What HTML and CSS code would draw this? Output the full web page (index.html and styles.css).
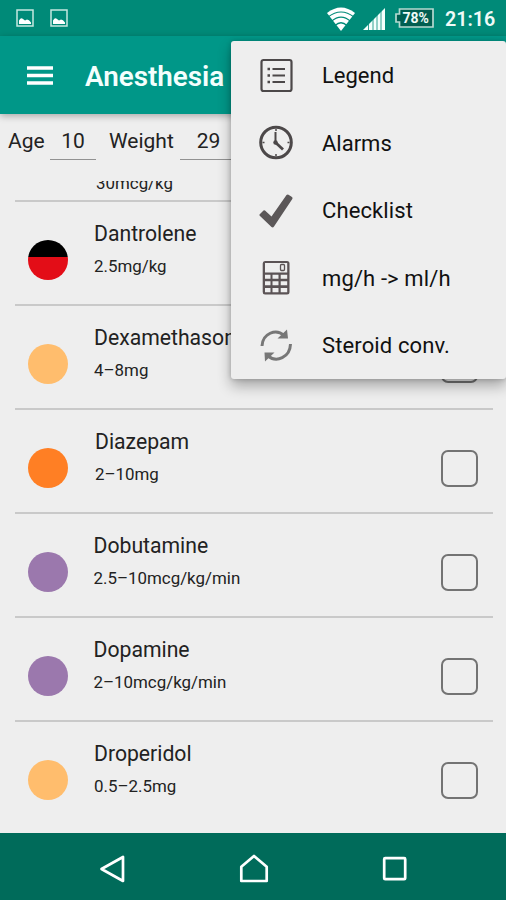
FILE: index.html
```html
<!DOCTYPE html>
<html lang="en">
<head>
<meta charset="utf-8">
<title>Anesthesia</title>
<link rel="stylesheet" href="styles.css">
</head>
<body>
<div class="screen">
  <div class="status">
    <svg class="pic" viewBox="0 0 18 18"><rect x="1" y="1" width="16" height="16" fill="none" stroke="#c5e8e0" stroke-width="1.5"/><path d="M3 15v-3.500q2-3.500 4-1.500l2 1.500 2-1q2 0 4 3V15z" fill="#fff"/></svg>
    <svg class="pic" viewBox="0 0 18 18"><rect x="1" y="1" width="16" height="16" fill="none" stroke="#c5e8e0" stroke-width="1.5"/><path d="M3 15v-3.500q2-3.500 4-1.500l2 1.500 2-1q2 0 4 3V15z" fill="#fff"/></svg>
    <svg class="wifi" viewBox="0 0 28 24"><path d="M0 6Q14-5 28 6L14 24z" fill="#fff"/><path d="M1 10Q14 0 27 10M4.500 14.200Q14 6 23.500 14.200M8 18.500Q14 13 20 18.500" fill="none" stroke="#008a78" stroke-width="1.200"/></svg>
    <svg class="signal" viewBox="0 0 22 22"><path d="M0 22L22 0V22z" fill="#f4fffc"/><path d="M5.500 15v7M10 10v12M14 6v16M18 2v20" stroke="#008a78" stroke-width=".8"/></svg>
    <div class="battery">
      <svg viewBox="0 0 39 20"><path d="M4.500 1H38V19H4.500V14H1V6H4.500z" fill="#005e50" stroke="#b5d9d0" stroke-width="1.700"/></svg>
      <span>78%</span>
    </div>
    <span class="time">21:16</span>
  </div>
  <header class="appbar">
    <svg class="burger" viewBox="0 0 26 20"><path d="M0 2h26M0 9.500h26M0 17h26" stroke="#fff" stroke-width="3.600"/></svg>
    <h1>Anesthesia</h1>
  </header>
  <div class="filters">
    <span class="label age">Age</span><span class="field f1">10</span>
    <span class="label weight">Weight</span><span class="field f2">29</span>
  </div>
  <main class="list">
    <div class="row first"><div class="text"><span class="dose">30mcg/kg</span></div></div>
    <div class="row"><i class="dot split"></i><div class="text"><span class="name">Dantrolene</span><span class="dose">2.5mg/kg</span></div><i class="check"></i></div>
    <div class="row"><i class="dot peach"></i><div class="text"><span class="name">Dexamethasone</span><span class="dose">4–8mg</span></div><i class="check"></i></div>
    <div class="row"><i class="dot orange"></i><div class="text inset"><span class="name">Diazepam</span><span class="dose">2–10mg</span></div><i class="check"></i></div>
    <div class="row"><i class="dot violet"></i><div class="text outset"><span class="name">Dobutamine</span><span class="dose">2.5–10mcg/kg/min</span></div><i class="check"></i></div>
    <div class="row"><i class="dot violet"></i><div class="text outset"><span class="name">Dopamine</span><span class="dose">2–10mcg/kg/min</span></div><i class="check"></i></div>
    <div class="row"><i class="dot peach"></i><div class="text"><span class="name">Droperidol</span><span class="dose">0.5–2.5mg</span></div><i class="check"></i></div>
  </main>
  <nav class="navbar">
    <svg viewBox="0 0 30 30"><path d="M25 3V27L3.500 15z"/></svg>
    <svg viewBox="0 0 30 30"><path d="M2.300 12.800L15 2l12.700 10.800V27H2.300z"/></svg>
    <svg viewBox="0 0 30 30"><rect x="4.200" y="4.200" width="21" height="21" rx="1"/></svg>
  </nav>
  <div class="menu">
    <div class="item"><svg viewBox="0 0 36 36"><rect x="3.500" y="2" width="30" height="31" rx="2" fill="none" stroke="#4c4849" stroke-width="2.200"/><path d="M14.500 11h12.500M14.500 17.500h12.500M14.500 24h12.500" stroke="#4c4849" stroke-width="2"/><path d="M9.500 11h2.500M9.500 17.500h2.500M9.500 24h2.500" stroke="#4c4849" stroke-width="2.500"/></svg><span>Legend</span></div>
    <div class="item"><svg viewBox="0 0 36 36"><circle cx="18" cy="17.500" r="15.300" fill="none" stroke="#4c4849" stroke-width="3"/><path d="M18 4v2M18 29v2M4.500 17.500h2M29.500 17.500h2" stroke="#4c4849" stroke-width="1.500"/><path d="M17.500 7V17.500" fill="none" stroke="#4c4849" stroke-width="2"/><path d="M17.500 17.500l7.500 7" stroke="#4c4849" stroke-width="2.800"/><circle cx="17.500" cy="17.500" r="2.200" fill="#4c4849"/></svg><span>Alarms</span></div>
    <div class="item"><svg viewBox="0 0 36 36"><path d="M1.500 21.500L5.500 17.500Q6.200 17 7 17.600L13.500 23.500L28.500 2Q29.500 1 30.500 1.700L34 4Q35 5 34.300 6L16 33.500Q15 35 13.500 34L2 23Q1 22.200 1.500 21.500z" fill="#5b5758"/></svg><span class="wide">Checklist</span></div>
    <div class="item"><svg viewBox="0 0 36 36"><path fill="#5b5355" fill-rule="evenodd" d="M7 1H29Q31.500 1 31.500 3.500V32Q31.500 34.500 29 34.500H7Q4.700 34.500 4.700 32V3.500Q4.700 1 7 1zM7 3H29.200V12.500H7zM7 14.700h5.500v4H7zM14.500 14.700h6v4h-6zM22.700 14.700h6.500v4h-6.500zM7 21.300h5.500v4H7zM14.500 21.300h6v4h-6zM22.700 21.300h6.500v4h-6.500zM7 28h5.500v4.200H7zM14.500 28h6v4.200h-6zM22.700 28h6.500v4.200h-6.500z"/><rect x="22.500" y="4.500" width="4" height="6" rx="1" fill="none" stroke="#5b5355" stroke-width="1.300"/></svg><span class="wide">mg/h -&gt; ml/h</span></div>
    <div class="item"><svg viewBox="0 0 36 36"><g fill="none" stroke="#777" stroke-width="3"><path d="M4 18C4.500 5.500 18 0 26 7.500"/><path d="M32.500 16C32 29.500 18.500 35 10 28"/></g><path d="M29 1.500L30 10.500H19.500zM7 33.500L6.500 24.500H16.500z" fill="#777"/></svg><span class="wide">Steroid conv.</span></div>
  </div>
</div>
</body>
</html>
```
FILE: styles.css
```css
* { box-sizing: border-box; }
body { margin: 0; font-family: Roboto, sans-serif; color: #222; }
svg { display: block; flex: none; }
.screen { position: relative; width: 506px; height: 900px; overflow: hidden; background: #eee; display: flex; flex-direction: column; }
.status { height: 36px; flex: none; background: #008a78; display: flex; align-items: center; padding: 0 11px 0 16px; color: #effaf7; }
.pic { width: 18px; height: 18px; margin-right: 16px; }
.wifi { width: 28px; height: 24px; margin-left: auto; margin-top: 1px; }
.signal { width: 22px; height: 22px; margin-left: 8px; margin-top: 2px; }
.battery { width: 39px; height: 20px; margin-left: 10px; display: grid; }
.battery > * { grid-area: 1 / 1; }
.battery span { font-size: 14px; line-height: 20px; font-weight: 700; padding-left: 7.5px; }
.time { width: 50px; margin-left: 11px; margin-top: 2px; font-size: 19.7px; font-weight: 600; white-space: nowrap; }
.appbar { height: 78px; flex: none; background: #009788; display: flex; align-items: center; padding-left: 27px; position: relative; box-shadow: 0 2px 7px rgba(0,0,0,.3); }
.burger { width: 26px; height: 20px; margin-top: 1px; }
h1 { margin: 4px 0 0 32px; font-size: 27.8px; font-weight: 600; color: #f4fffd; line-height: 36px; }
.filters { height: 67px; flex: none; display: flex; padding-left: 8px; font-size: 21px; line-height: 26px; }
.label { margin-top: 14px; height: 26px; white-space: nowrap; }
.age { width: 42px; }
.weight { width: 71px; margin-left: 13px; }
.field { height: 46px; padding-top: 14px; border-bottom: 1.5px solid #929292; text-align: center; }
.f1 { width: 46px; }
.f2 { width: 57px; }
.list { flex: 1; overflow: hidden; display: flex; flex-direction: column; padding: 0 13px 0 15px; }
.row { height: 104px; flex: none; border-bottom: 2px solid #c9c9c9; display: flex; padding-left: 13px; }
.row:last-child { border: 0; }
.row.first { height: 21px; align-items: flex-end; padding-left: 81px; }
.first .dose { margin-bottom: 5px; }
.dot { width: 40px; height: 40px; border-radius: 50%; margin-top: 38px; flex: none; }
.split { background: linear-gradient(#000 17px, #e30d17 17px); }
.peach { background: #ffbd6d; }
.orange { background: #ff7f24; }
.violet { background: #9b78ad; }
.text { flex: 1; margin-left: 26px; display: flex; flex-direction: column; align-items: flex-start; white-space: nowrap; }
.text.inset { margin-left: 27px; }
.text.outset { margin-left: 25.5px; }
.row.first .text { margin: 0; }
.name { margin-top: 19px; font-size: 21.2px; line-height: 26px; }
.dose { font-size: 16.9px; line-height: 24px; }
.name + .dose { margin-top: 7px; }
.check { width: 37px; height: 37px; margin: 40px 15px 0 0; border: 2px solid #737373; border-radius: 7px; flex: none; }
.navbar { height: 67px; flex: none; background: #006b5a; display: flex; justify-content: center; align-items: center; gap: 111px; padding: 4px 0 0 2px; }
.navbar svg { width: 30px; height: 30px; fill: none; stroke: #fff; stroke-width: 2.7; stroke-linejoin: round; }
.menu { position: absolute; left: 231px; top: 41px; width: 275px; height: 338px; padding-top: 1px; background: #eee; border-radius: 3px; box-shadow: 0 7px 14px rgba(0,0,0,.3), 0 0 5px rgba(0,0,0,.2); color: #111; }
.item { height: 67.5px; display: flex; align-items: center; padding-left: 27px; font-size: 22px; white-space: nowrap; }
.item svg { width: 36px; height: 36px; margin-right: 28px; }
.wide { letter-spacing: .12px; }
```
